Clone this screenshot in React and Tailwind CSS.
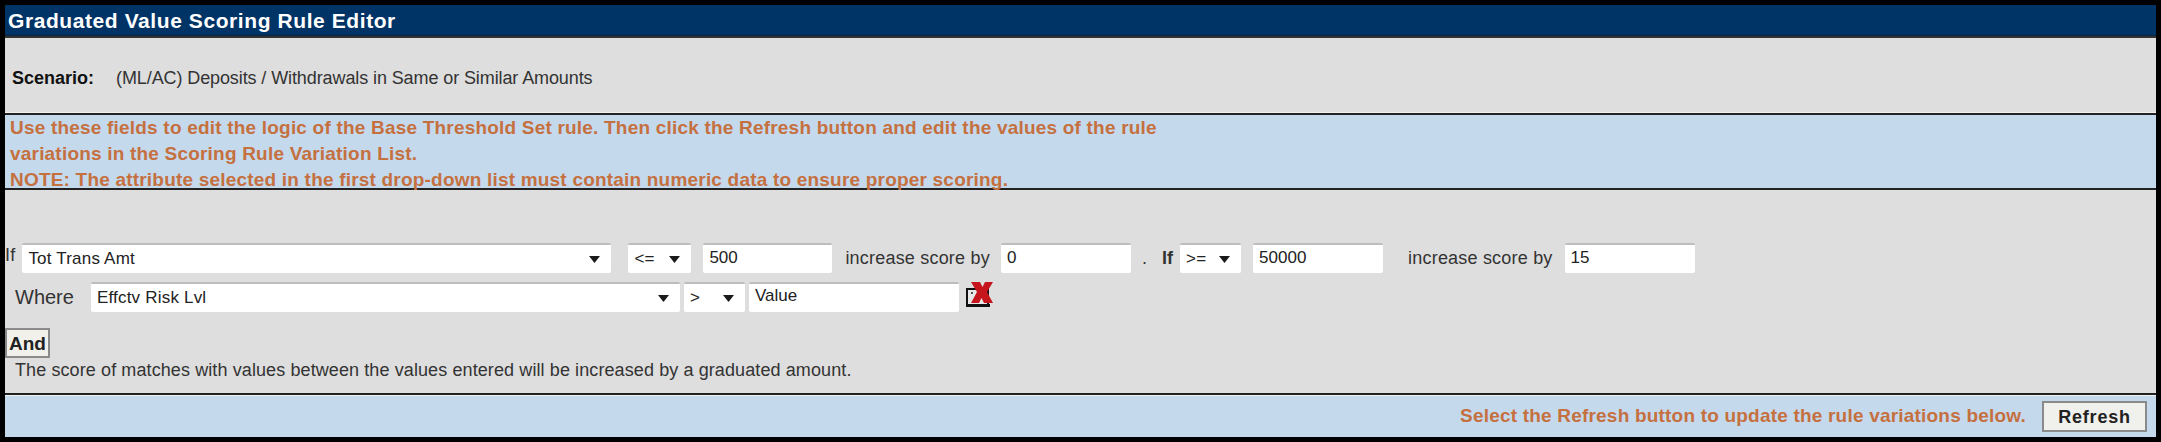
const font = "font-['Liberation_Sans',Arial,sans-serif]";

function Select({ value, width, left }) {
  return (
    <div className={`relative shrink-0 h-[30px] ${width} ${left}`}>
      <select defaultValue={value} className="appearance-none w-full h-full bg-white border-t-2 border-[#bdbdbd] rounded-[2px] pl-[6px] text-[17px] tracking-[0.2px] text-[#222] outline-none">
        <option>{value}</option>
      </select>
      <svg className="absolute right-[11px] top-[13px]" width="11" height="7" viewBox="0 0 11 7">
        <path d="M0 0h11L5.5 7z" fill="#1a1a1a" />
      </svg>
    </div>
  );
}

function Field({ value, width, left }) {
  return (
    <input
      defaultValue={value}
      className={`shrink-0 h-[30px] ${width} ${left} bg-white border-t-2 border-[#bdbdbd] rounded-[2px] pl-[6px] pb-[3px] text-[17px] text-[#222] outline-none`}
    />
  );
}

function Label({ children, left, className = "text-[18px] tracking-[0.2px]" }) {
  return <span className={`shrink-0 text-[#333] whitespace-nowrap ${left} ${className}`}>{children}</span>;
}

function DeleteIcon() {
  return (
    <svg className="ml-[7px] shrink-0 self-start" width="27" height="30" viewBox="0 0 27 30">
      <rect x="1" y="8" width="21" height="17" fill="#e8e8e8" stroke="#111" strokeWidth="2" />
      <rect x="1" y="23" width="23" height="3" fill="#111" />
      <path d="M5 11h2v2H5z" fill="#555" />
      <path d="M5 1h9l2.5 5L19 1h8l-6 10 6 11h-9l-2.5-5-2.5 5H5l6-11z" fill="#c4161c" />
    </svg>
  );
}

export default function App() {
  return (
    <div className={`${font} w-full h-[442px] bg-black p-[5px] flex flex-col overflow-hidden`}>
      <div className="h-[31px] shrink-0 bg-[#003366] flex items-center pl-[3px] border-b border-[#0a2540]">
        <h1 className="text-[21px] font-bold text-white tracking-[0.58px] leading-none">Graduated Value Scoring Rule Editor</h1>
      </div>

      <div className="h-[77px] shrink-0 bg-[#dedede] border-t-2 border-[#333] border-b border-b-[#f2f2f2] flex items-center pl-[7px] pt-[7px] text-[18px]">
        <span className="font-bold text-[#111]">Scenario:</span>
        <span className="ml-[22px] text-[#333] tracking-[-0.1px]">(ML/AC) Deposits / Withdrawals in Same or Similar Amounts</span>
      </div>

      <div className="h-[77px] shrink-0 bg-[#c5d9ed] border-y-2 border-[#222] pl-[5px] text-[19px] leading-[26px] font-bold text-[#c5703f] tracking-[0.2px]">
        <p>Use these fields to edit the logic of the Base Threshold Set rule. Then click the Refresh button and edit the values of the rule</p>
        <p>variations in the Scoring Rule Variation List.</p>
        <p>NOTE: The attribute selected in the first drop-down list must contain numeric data to ensure proper scoring.</p>
      </div>

      <div className="flex-1 min-h-0 bg-[#dedede] border-b-2 border-[#222] pt-[53px]">
        <div className="flex items-center h-[30px]">
          <Label left="ml-0 -mt-[6px]">If</Label>
          <Select value="Tot Trans Amt" width="w-[589px]" left="ml-[7px]" />
          <Select value="<=" width="w-[63px]" left="ml-[17px]" />
          <Field value="500" width="w-[129px]" left="ml-[12px]" />
          <Label left="ml-[13px]">increase score by</Label>
          <Field value="0" width="w-[130px]" left="ml-[11px]" />
          <Label left="ml-[11px]">.</Label>
          <Label left="ml-[15px]" className="text-[18px] font-bold">If</Label>
          <Select value=">=" width="w-[61px]" left="ml-[7px]" />
          <Field value="50000" width="w-[130px]" left="ml-[12px]" />
          <Label left="ml-[25px]">increase score by</Label>
          <Field value="15" width="w-[130px]" left="ml-[12px]" />
        </div>

        <div className="flex items-center h-[31px] mt-[8px]">
          <Label left="ml-[10px]" className="text-[20px]">Where</Label>
          <Select value="Effctv Risk Lvl" width="w-[589px]" left="ml-[17px]" />
          <Select value=">" width="w-[61px]" left="ml-[4px]" />
          <Field value="Value" width="w-[210px]" left="ml-[4px]" />
          <DeleteIcon />
        </div>

        <button className="block mt-[16px] h-[30px] w-[45px] bg-[#f2f0ea] border-2 border-[#8a8a8a] text-[19px] font-bold text-[#222] leading-none">And</button>
        <p className="ml-[10px] mt-[3px] text-[18px] leading-[18px] text-[#333] tracking-[0.1px]">The score of matches with values between the values entered will be increased by a graduated amount.</p>
      </div>

      <div className="h-[42px] shrink-0 bg-[#c5d9ed] border-t border-[#f2f2f2] flex items-center justify-end pr-[9px]">
        <span className="text-[19px] font-bold text-[#c5703f] tracking-[0.2px]">Select the Refresh button to update the rule variations below.</span>
        <button className="ml-[16px] w-[105px] h-[31px] bg-[#f0f0ec] border-2 border-[#8a8a8a] text-[18px] font-bold text-[#222] tracking-[0.8px] leading-none">Refresh</button>
      </div>
    </div>
  );
}
